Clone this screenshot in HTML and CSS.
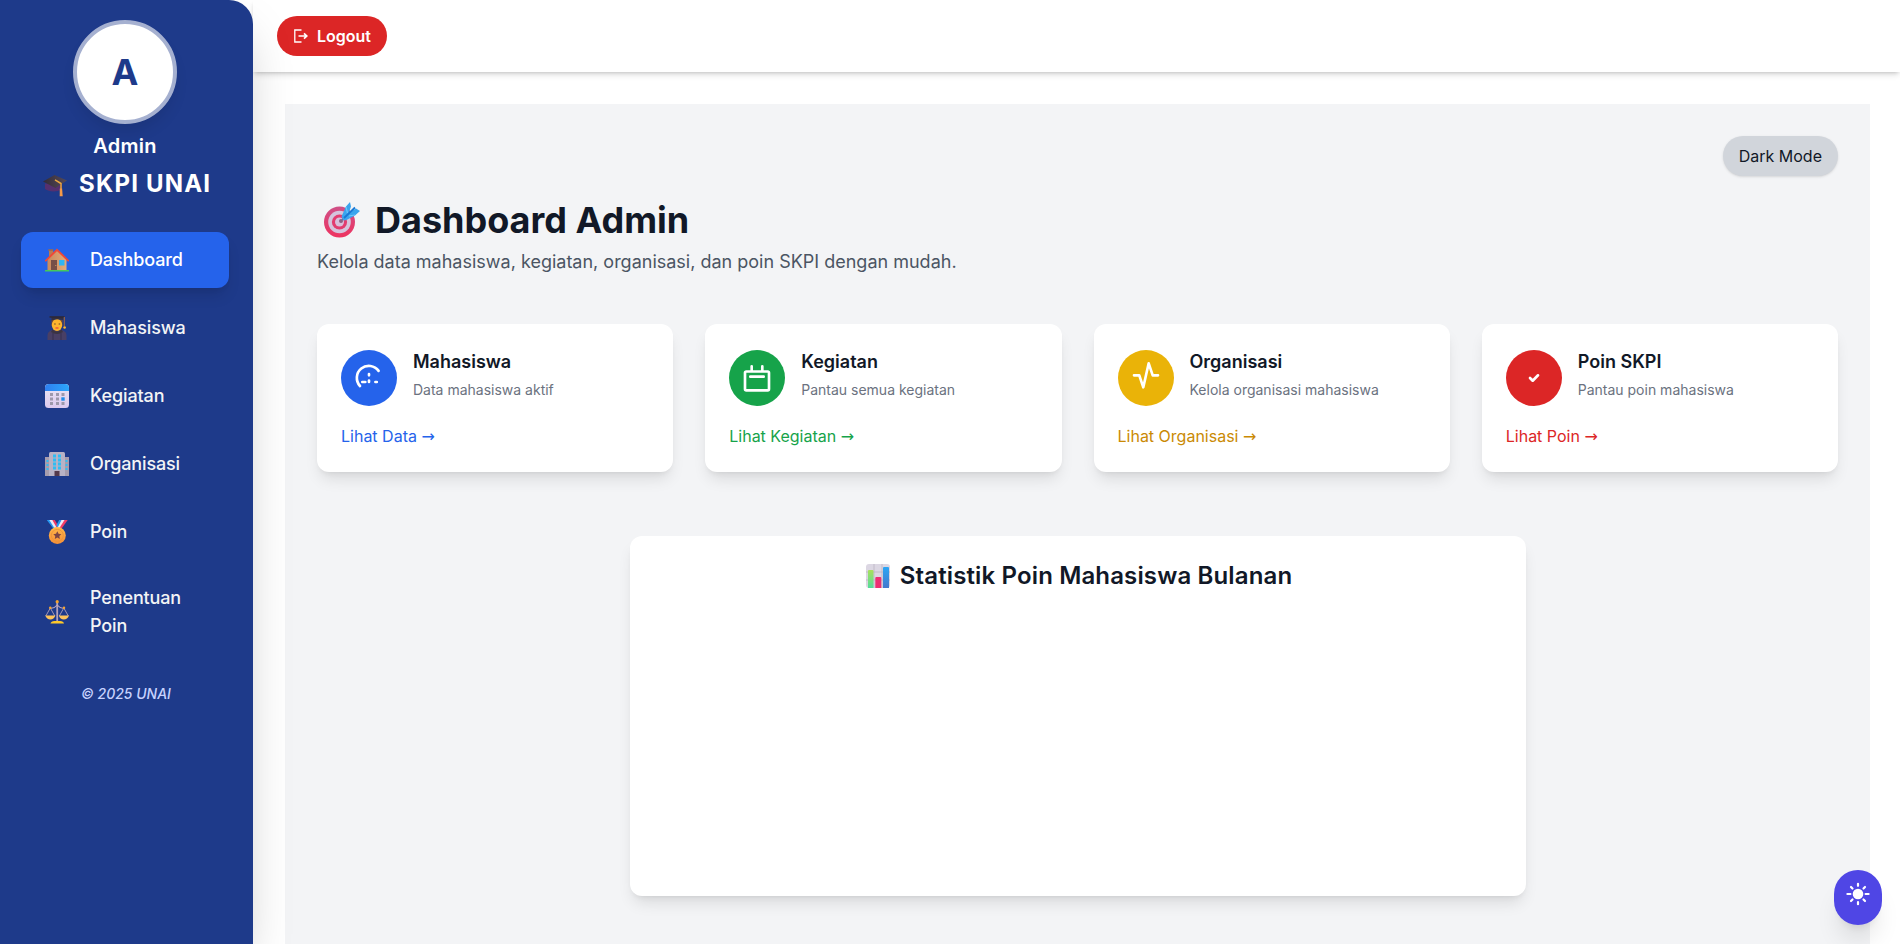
FILE: index.html
```html
<!DOCTYPE html>
<html lang="id">
<head>
<meta charset="utf-8">
<title>Dashboard Admin</title>
<link rel="stylesheet" href="styles.css">
</head>
<body>
<svg width="0" height="0" class="defs" aria-hidden="true">
  <defs>
    <linearGradient id="gHouse" x1="0" x2="1"><stop offset="0" stop-color="#c98a5c"/><stop offset="1" stop-color="#e5ab79"/></linearGradient>
    <linearGradient id="gGold" x1="0" y1="0" x2="0" y2="1"><stop offset="0" stop-color="#ffb84a"/><stop offset="1" stop-color="#f58f38"/></linearGradient>
    <linearGradient id="gPaper" x1="0" y1="0" x2="0" y2="1"><stop offset="0" stop-color="#e9e6f2"/><stop offset="1" stop-color="#dcc9ee"/></linearGradient>
    <linearGradient id="gBlue" x1="0" y1="0" x2="1" y2="0"><stop offset="0" stop-color="#2f7ff0"/><stop offset="1" stop-color="#2ba6fb"/></linearGradient>
    <linearGradient id="gCap" x1="0" y1="0" x2="1" y2="0"><stop offset="0" stop-color="#332c38"/><stop offset="1" stop-color="#564a58"/></linearGradient>
    <linearGradient id="gGreen" x1="0" y1="0" x2="0" y2="1"><stop offset="0" stop-color="#a9e05c"/><stop offset="1" stop-color="#55dc9c"/></linearGradient>
    <linearGradient id="gBar" x1="0" y1="0" x2="0" y2="1"><stop offset="0" stop-color="#2ba6f5"/><stop offset="1" stop-color="#4478cc"/></linearGradient>
    <linearGradient id="gTarget" x1="0" y1="0" x2="0" y2="1"><stop offset="0" stop-color="#cf5088"/><stop offset="1" stop-color="#ee3360"/></linearGradient>
  </defs>
</svg>
<div class="layout">
  <aside class="sidebar">
    <div class="avatar">A</div>
    <div class="user">Admin</div>
    <div class="brand">
      <svg class="emoji" viewBox="0 0 24 24"><path d="M2 10.500v5.500c4 3.200 12 3.500 17 0v-6z" fill="#55306f"/><path d="M0 8.500 11.500 2 24 7.500 12.500 15z" fill="url(#gCap)"/><path d="M12 6.800l6 3.700V17" fill="none" stroke="#e9a640" stroke-width="1.500"/><path d="M16.800 15.500h2.300l.6 7.800h-3z" fill="#f59a48"/></svg>
      <span>SKPI UNAI</span>
    </div>
    <nav class="nav">
      <a class="item active"><svg class="emoji" viewBox="0 0 24 24"><path d="M4 2h4v8H4z" fill="#b87a55"/><path d="M3.300 1.200h5v1.600h-5z" fill="#9b6950"/><path d="M2.500 11 12 2l9.500 9v11.500h-19z" fill="url(#gHouse)"/><path d="M6 12h6v10.500H6z" fill="#775047"/><circle cx="10.800" cy="17.500" r=".6" fill="#dca460"/><path d="M14 12h5.500v5.500H14z" fill="#2fb5f4"/><path d="M.8 12.600 12 1.800l11.200 10.800" fill="none" stroke="#ef4838" stroke-width="1.900" stroke-linecap="round"/><path d="M0 22h24v1.500H0z" fill="#45c85b"/></svg><span>Dashboard</span></a>
      <a class="item"><svg class="emoji" viewBox="0 0 24 24"><path d="M6.500 4h11v6h-11z" fill="#724b35"/><path d="M2.500 24v-4.500q0-5 6-5.500h7q6 .5 6 5.500V24z" fill="#493f65"/><ellipse cx="12" cy="9" rx="5.200" ry="6" fill="#ffb52d"/><path d="M7.500 13.500q4.500 4 9 0l1.500 2.500q-6 4-12 0z" fill="#3b3343"/><path d="M6.500 1h11.800v3Q12 2.500 6.500 4.500z" fill="#342e3e"/><path d="M4.500.2h15v1.500h-15z" fill="#2c2838"/><path d="M19.300 1v9" stroke="#a76a3d"/><circle cx="19.600" cy="11.500" r="1.300" fill="#ffb52d"/><path d="M9.200 8h1.500m3 0h1.500" stroke="#60422f" stroke-width="1"/><path d="M10.500 12h3" stroke="#e7403d" stroke-width="1.200"/><path d="M8 17v7m8-7v7" stroke="#373050"/></svg><span>Mahasiswa</span></a>
      <a class="item"><svg class="emoji" viewBox="0 0 24 24"><rect width="24" height="24" rx="3.500" fill="url(#gPaper)"/><path d="M0 7V4q0-4 4-4h16q4 0 4 4v3z" fill="url(#gBlue)"/><path d="M5 9h3v3H5zm6 0h3v3h-3zm5.500 0h3v3h-3zM5 13.500h3v3H5zm6 0h3v3h-3zM5 18h3v3H5zm6 0h3v3h-3zm5.500 0h3v3h-3z" fill="#9d98ab"/><path d="M16.300 13.300h3.400v3.400h-3.400z" fill="#208ce9"/></svg><span>Kegiatan</span></a>
      <a class="item"><svg class="emoji" viewBox="0 0 24 24"><path d="M0 5h5v19H0zm19 0h5v19h-5z" fill="#a69cad"/><path d="M4 1.500Q4 0 5.500 0h13Q20 0 20 1.500V24H4z" fill="#b8b2c5"/><path d="M8 2.500h3v3H8zm5 0h3v3h-3zM8 6.500h3v3H8zm5 0h3v3h-3zM8 10.500h3v3H8zm5 0h3v3h-3zM8 14.500h3v3H8zm5 0h3v3h-3zM1.500 8h2v2h-2zm0 4h2v2h-2zm0 4h2v2h-2zm19-8h2v2h-2zm0 4h2v2h-2zm0 4h2v2h-2z" fill="#2fbdf4"/><path d="M9.500 19h5v5h-5z" fill="#54394b"/></svg><span>Organisasi</span></a>
      <a class="item"><svg class="emoji" viewBox="0 0 24 24"><path d="M1.800 0h7l5 8-4 2.500z" fill="#2798f2"/><path d="M4.300 0h4l5 8-3 1.500z" fill="#e9e8f6"/><path d="M7.300 0h2.500l4 7-2 1z" fill="#ef3865"/><path d="M22.700 0h-7l-4.500 8 4 2.500z" fill="#f23d68"/><path d="M19.500 0h-3.300L11.300 8l2.500 1z" fill="#eeeaf7"/><path d="M16.500 0h-2.300l-3 5.500 1.500 2z" fill="#2798f2"/><circle cx="12.300" cy="15.400" r="8.500" fill="url(#gGold)"/><circle cx="12.300" cy="15.400" r="6" fill="none" stroke="#ea9238" stroke-width=".8"/><path d="m12.300 11.200 1.250 2.550 2.800.4-2 1.950.45 2.800-2.500-1.300-2.500 1.300.45-2.800-2-1.950 2.800-.4z" fill="#7b4545"/></svg><span>Poin</span></a>
      <a class="item"><svg class="emoji" viewBox="0 0 24 24"><path d="M11.300 2h1.800v20h-1.800z" fill="#b4a1ba"/><path d="M4.500 7.800q4 1.500 7.700-2.800 3.700 4.300 7.800 2.800" fill="none" stroke="#c0a6bc" stroke-width="1.100"/><path d="m5.300 8-4.500 8m4.500-8 4.500 8m9-8-4.500 8m4.500-8 4.500 8" stroke="#b4a1ba" stroke-width=".9"/><path d="M.2 15.500h10.200q-1.500 4-5 4t-5.200-4zm13.600 0H24q-1.500 4-5.200 4t-5-4z" fill="#ffc45a"/><path d="M5.500 23.600q.5-2.300 4-2.600h5.500q3.500.3 4 2.600z" fill="#ffc928"/><circle cx="12.200" cy="1.700" r="1.600" fill="#f7a52d"/><circle cx="5.300" cy="7.700" r="1.200" fill="#f7a52d"/><circle cx="19" cy="7.700" r="1.200" fill="#f7a52d"/></svg><span>Penentuan Poin</span></a>
    </nav>
    <footer class="copyright">© 2025 UNAI</footer>
  </aside>
  <div class="content">
    <header class="topbar">
      <button class="logout"><svg viewBox="0 0 14 14" width="14" height="14"><path d="M7.500 1H.8v12h6.700" fill="none" stroke="currentColor" stroke-width="1.300"/><path d="M4.500 7h8M10 4.300 12.800 7 10 9.700" fill="none" stroke="currentColor" stroke-width="1.700"/></svg><span>Logout</span></button>
    </header>
    <main class="main">
      <section class="panel">
        <div class="tools"><button class="mode">Dark Mode</button></div>
        <h1 class="title"><svg class="target" viewBox="0 0 36 36"><circle cx="15.500" cy="20" r="15.500" fill="url(#gTarget)"/><circle cx="15.500" cy="20" r="11.300" fill="#d5c4dc"/><circle cx="15.500" cy="20" r="7.600" fill="#e23c6f"/><circle cx="15.500" cy="20" r="4.500" fill="#d8bfdc"/><circle cx="17" cy="19" r="2" fill="#8d6184"/><path d="m18 18 8-8" stroke="#5a7da8" stroke-width="1.500"/><path d="m17.500 14.500 4.500-10 4-4.500 1 4.500-2 6 7-4 4 2.500-5 4.500-8.500 4.500-3 .5z" fill="#3aa5ee"/><path d="m20 16 11-10.500" stroke="#1a78d4" stroke-width="1.800"/><path d="m22 5 1.500 6M31 13l-6 1" stroke="#6cc4fb" stroke-width="1.200"/></svg><span>Dashboard Admin</span></h1>
        <p class="lead">Kelola data mahasiswa, kegiatan, organisasi, dan poin SKPI dengan mudah.</p>
        <div class="cards">
          <article class="card blue">
            <div class="card-top"><svg class="disc" viewBox="0 0 56 56"><path d="M37.600 20.900A12 12 0 1 0 19 36M28 24v1.300M28 30.600v1.300M21.300 32h3M34.400 32h1.400"/></svg><div><h2>Mahasiswa</h2><p>Data mahasiswa aktif</p></div></div>
            <a class="link">Lihat Data <span class="arrow">→</span></a>
          </article>
          <article class="card green">
            <div class="card-top"><svg class="disc" viewBox="0 0 56 56"><path d="M22.700 16.300v5M33.300 16.300v5M21.300 26.700h13.400M17.300 21.500h21.400q1.300 0 1.300 1.300V39q0 1.300-1.300 1.300H17.300Q16 40.300 16 39V22.800q0-1.300 1.300-1.300z"/></svg><div><h2>Kegiatan</h2><p>Pantau semua kegiatan</p></div></div>
            <a class="link">Lihat Kegiatan <span class="arrow">→</span></a>
          </article>
          <article class="card yellow">
            <div class="card-top"><svg class="disc" viewBox="0 0 56 56"><path d="M16 25.300h5.300l4 12 5.400-24 4 12H40"/></svg><div><h2>Organisasi</h2><p>Kelola organisasi mahasiswa</p></div></div>
            <a class="link">Lihat Organisasi <span class="arrow">→</span></a>
          </article>
          <article class="card red">
            <div class="card-top"><svg class="disc" viewBox="0 0 56 56"><path d="m24 28 2.700 2.700 5.300-5.400"/></svg><div><h2>Poin SKPI</h2><p>Pantau poin mahasiswa</p></div></div>
            <a class="link">Lihat Poin <span class="arrow">→</span></a>
          </article>
        </div>
        <section class="chart">
          <h2 class="chart-title"><svg class="emoji" viewBox="0 0 24 24"><rect width="24" height="24" rx="3" fill="#dcd7e3"/><path d="M0 8h24M0 16h24M8 0v24M16 0v24" stroke="#bbb5c3" stroke-width=".8"/><path d="M2 7q0-1 1-1h3.500q1 0 1 1v17H2z" fill="url(#gGreen)"/><path d="M9.300 14q0-1 1-1h4q1 0 1 1v10h-6z" fill="#ed2f72"/><path d="M17 4q0-1 1-1h4q1 0 1 1v20h-6z" fill="url(#gBar)"/></svg><span>Statistik Poin Mahasiswa Bulanan</span></h2>
        </section>
      </section>
    </main>
  </div>
</div>
<button class="fab" aria-label="Tema"><svg viewBox="0 0 24 24" width="24" height="24"><circle cx="12" cy="12" r="5.300" fill="currentColor"/><path d="M12 1.800v2M12 20.200v2M1.400 12h3M19.600 12h3M5 5l1.500 1.500M17.500 17.500 19 19M5 19l1.500-1.500M17.500 6.500 19 5" stroke="currentColor" stroke-width="2.200" stroke-linecap="round"/></svg></button>
</body>
</html>
```
FILE: styles.css
```css
* { box-sizing: border-box; margin: 0; }
body { font: 16px/24px Inter, "Liberation Sans", sans-serif; color: #111827; background: #fff; height: 944px; overflow: hidden; }
button { font: inherit; border: 0; padding: 0; }
.defs { position: absolute; }
.layout { display: flex; height: 944px; }

.sidebar { width: 253px; flex: none; position: relative; z-index: 2; background: #1e3a8a; color: #fff; border-top-right-radius: 24px; padding: 20px 24px 0 21px; box-shadow: 0 25px 50px -12px rgba(0,0,0,.25); display: flex; flex-direction: column; }
.avatar { align-self: center; width: 104px; height: 104px; border-radius: 50%; border: 4px solid #a5b0d0; background: #fff; color: #1e3a8a; font-size: 36px; line-height: 96px; font-weight: 700; text-align: center; box-shadow: 0 10px 15px -3px rgba(0,0,0,.1); }
.user { margin-top: 8px; font-size: 20px; line-height: 28px; font-weight: 600; letter-spacing: .3px; text-align: center; }
.brand { margin-top: 8px; padding-left: 22px; display: flex; align-items: center; gap: 12px; font-size: 24px; line-height: 32px; font-weight: 700; letter-spacing: 1.2px; white-space: nowrap; }
.emoji { width: 24px; height: 24px; flex: none; display: block; }
.brand .emoji { margin-top: 2px; }
.nav { margin-top: 32px; display: flex; flex-direction: column; gap: 12px; }
.item { display: flex; align-items: center; gap: 21px; padding: 12px 24px; min-height: 56px; border-radius: 12px; font-size: 18px; line-height: 28px; font-weight: 500; letter-spacing: -.13px; color: #f3f4f6; }
.item .emoji { margin-top: -1px; }
.active { background: #2563eb; color: #fff; box-shadow: 0 10px 15px -3px rgba(0,0,0,.12), 0 4px 6px -4px rgba(0,0,0,.1); }
.copyright { margin-top: 32px; padding-left: 2px; text-align: center; font-size: 14px; line-height: 20px; font-weight: 500; font-style: italic; color: #c7d2fe; }

.content { flex: 1; min-width: 0; display: flex; flex-direction: column; }
.topbar { height: 72px; flex: none; padding: 16px 24px; background: #fff; box-shadow: 0 4px 6px -1px rgba(0,0,0,.12), 0 2px 4px -2px rgba(0,0,0,.2); position: relative; z-index: 1; }
.logout { display: flex; align-items: center; gap: 9px; height: 40px; padding: 0 16px 0 17px; border-radius: 20px; background: #dc2626; color: #fff; font-weight: 600; }
.main { flex: 1; min-height: 0; padding: 32px 30px 0 32px; }
.panel { height: 100%; background: #f3f4f6; padding: 32px; }
.tools { display: flex; justify-content: flex-end; }
.mode { height: 40px; padding: 0 16px; border-radius: 20px; background: #d1d5db; color: #111827; box-shadow: 0 1px 3px rgba(0,0,0,.1), 0 1px 2px -1px rgba(0,0,0,.1); }
.title { margin-top: 24px; padding-left: 7px; display: flex; gap: 15px; align-items: center; font-size: 36px; line-height: 40px; font-weight: 700; }
.target { width: 36px; height: 36px; }
.lead { margin-top: 8px; font-size: 18px; line-height: 28px; color: #4b5563; }
.cards { margin-top: 48px; display: grid; grid-template-columns: repeat(4, 1fr); gap: 32px; }
.card { background: #fff; border-radius: 12px; padding: 24px; height: 148px; box-shadow: 0 10px 15px -3px rgba(0,0,0,.1), 0 4px 6px -4px rgba(0,0,0,.1); }
.card-top { display: flex; align-items: center; gap: 16px; height: 60px; }
.disc { width: 56px; height: 56px; border-radius: 50%; background: currentColor; flex: none; }
.disc path { fill: none; stroke: #fff; stroke-width: 2.67; stroke-linecap: round; stroke-linejoin: round; }
.card h2 { font-size: 18px; line-height: 28px; font-weight: 600; color: #111827; }
.card p { margin-top: 4px; padding-bottom: 8px; font-size: 14px; line-height: 20px; color: #6b7280; }
.link { display: block; margin-top: 16px; }
.arrow { font-family: "DejaVu Sans", sans-serif; font-size: 16px; line-height: 1; }
.blue { color: #2563eb; }
.green { color: #16a34a; }
.yellow { color: #eab308; }
.yellow .link { color: #ca8a04; }
.red { color: #dc2626; }
.chart { width: 896px; height: 360px; margin: 64px auto 0; padding: 24px; border-radius: 12px; background: #fff; box-shadow: 0 10px 15px -3px rgba(0,0,0,.1), 0 4px 6px -4px rgba(0,0,0,.1); }
.chart-title { display: flex; justify-content: center; align-items: center; gap: 10px; padding-left: 3px; font-size: 24px; line-height: 32px; font-weight: 600; letter-spacing: .14px; }
.fab { position: fixed; right: 18px; bottom: 19px; width: 48px; height: 55px; border-radius: 24px; background: #4f46e5; color: #fff; display: flex; justify-content: center; padding-top: 12px; z-index: 3; box-shadow: 0 20px 25px -5px rgba(0,0,0,.1), 0 8px 10px -6px rgba(0,0,0,.1); }
```
